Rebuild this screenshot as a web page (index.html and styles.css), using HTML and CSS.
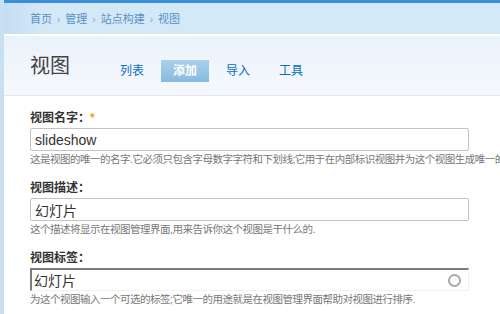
FILE: index.html
```html
<!DOCTYPE html>
<html lang="zh-CN">
<head>
  <meta charset="UTF-8">
  <title>视图 - 添加</title>
  <link rel="stylesheet" href="styles.css">
</head>
<body>
  <div class="page">
    <div class="topbar">
      <div class="breadcrumb">
        <a href="#">首页</a><span class="sep">›</span><a href="#">管理</a><span class="sep">›</span><a href="#">站点构建</a><span class="sep">›</span><a href="#">视图</a>
      </div>
    </div>

    <div class="header">
      <h1>视图</h1>
      <ul class="tabs">
        <li><a href="#">列表</a></li>
        <li class="active"><a href="#">添加</a></li>
        <li><a href="#">导入</a></li>
        <li><a href="#">工具</a></li>
      </ul>
    </div>

    <form class="content">
      <div class="field">
        <label>视图名字：<span class="required">*</span></label>
        <input type="text" class="text" value="slideshow">
        <div class="desc">这是视图的唯一的名字.它必须只包含字母数字字符和下划线;它用于在内部标识视图并为这个视图生成唯一的主题模板名字.</div>
      </div>

      <div class="field">
        <label>视图描述：</label>
        <input type="text" class="text" value="幻灯片">
        <div class="desc">这个描述将显示在视图管理界面,用来告诉你这个视图是干什么的.</div>
      </div>

      <div class="field">
        <label>视图标签：</label>
        <div class="autocomplete">
          <input type="text" class="text tag" value="幻灯片">
          <span class="throbber"></span>
        </div>
        <div class="desc">为这个视图输入一个可选的标签;它唯一的用途就是在视图管理界面帮助对视图进行排序.</div>
      </div>
    </form>
  </div>
</body>
</html>
```

FILE: styles.css
```css
html, body {
  margin: 0;
  height: 100%;
  overflow: hidden;
}

body {
  font-family: "Liberation Sans", "Noto Sans CJK SC", sans-serif;
  background: #fff;
  color: #333;
}

.page {
  border-left: 4px solid #c9e0f3;
  min-height: 100%;
  overflow: hidden;
}

.topbar {
  border-top: 3px solid #3a8edc;
  background: linear-gradient(to right, #c3def4, #d4e9f8 40px, #d4e9f8);
  border-bottom: 2px solid #fff;
  box-sizing: border-box;
  height: 36px;
}

.breadcrumb {
  padding: 9px 0 0 26px;
  font-size: 11px;
  line-height: 15px;
}

.breadcrumb a {
  color: #5b8fc7;
  text-decoration: none;
}

.breadcrumb .sep {
  color: #7fa4cc;
  margin: 0 5px;
  font-size: 10px;
}

.header {
  display: flex;
  align-items: flex-start;
  height: 59px;
  padding-left: 26px;
  background: linear-gradient(to bottom, #eaf2fa, #f5f9fd);
  border-bottom: 1px solid #e1e9f1;
}

.header h1 {
  margin: 17px 0 0;
  font-size: 20px;
  font-weight: normal;
  color: #444;
  line-height: 26px;
}

.tabs {
  list-style: none;
  display: flex;
  margin: 24px 0 0 46px;
  padding: 0;
}

.tabs li a {
  display: block;
  padding: 0 12px;
  height: 22px;
  line-height: 22px;
  font-size: 12px;
  color: #0a6ec4;
  text-decoration: none;
  margin-right: 5px;
}

.tabs li:first-child a {
  padding-left: 4px;
}

.tabs li.active a {
  background: linear-gradient(to bottom, #aad0ea, #86bbe0);
  color: #fff;
  font-weight: bold;
}

.content {
  padding: 14px 0 0 26px;
}

.field {
  height: 70px;
}

.field label {
  display: block;
  font-size: 12px;
  font-weight: bold;
  color: #333;
  line-height: 16px;
  margin-bottom: 2px;
}

.required {
  color: #f5a100;
}

.text {
  box-sizing: border-box;
  width: 439px;
  height: 23px;
  margin: 0;
  padding: 0 4px;
  border: 1px solid #c2c2c6;
  border-radius: 2px;
  font-family: "Liberation Sans", "Noto Sans CJK SC", sans-serif;
  font-size: 14px;
  color: #333;
  background: #fff;
}

.autocomplete {
  position: relative;
  width: 439px;
}

.text.tag {
  border-radius: 0;
  border-top: 2px solid #7d7d7d;
  border-left: 2px solid #7d7d7d;
  border-right: 1px solid #f1f1f1;
  border-bottom: 1px solid #f1f1f1;
  padding-left: 2px;
}

.throbber {
  position: absolute;
  right: 8px;
  top: 6px;
  width: 9px;
  height: 9px;
  border: 2px solid #a9a9a9;
  border-radius: 50%;
}

.desc {
  font-size: 10.5px;
  letter-spacing: -0.5px;
  color: #777;
  line-height: 14px;
  margin-top: 1px;
  white-space: nowrap;
  overflow: hidden;
}
```
